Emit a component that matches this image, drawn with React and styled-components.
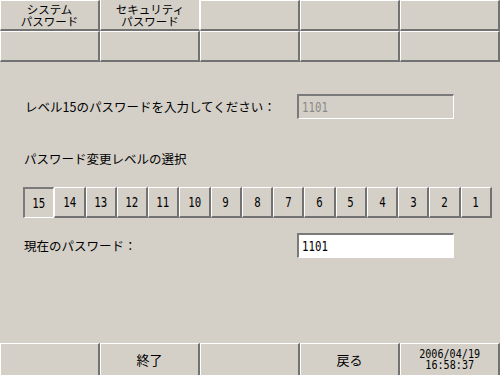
import styled, { createGlobalStyle } from "styled-components"

const GlobalStyle = createGlobalStyle`
  html, body {
    margin: 0;
    padding: 0;
    background: #d4d0c8;
  }
  body {
    font-family: "Noto Sans CJK JP", "Noto Sans", sans-serif;
    color: #000;
  }
`

const Screen = styled.div`
  width: 500px;
  height: 375px;
  background: #d4d0c8;
  display: flex;
  flex-direction: column;
  overflow: hidden;
`

const TabGrid = styled.div`
  display: grid;
  grid-template-columns: repeat(5, 100px);
  grid-template-rows: 31px 31px;
`

const PanelButton = styled.div`
  box-sizing: border-box;
  display: flex;
  flex-direction: column;
  align-items: center;
  justify-content: center;
  text-align: center;
  border-style: solid;
  border-width: 1px 2px 2px 1px;
  border-color: #ffffff #727272 #727272 #ffffff;
  font-size: 11.5px;
  line-height: 12px;
  ${p => p.$active && `
    border-color: #ffffff #ffffff #727272 #ffffff;
    border-width: 0 1px 2px 1px;
  `}
`

const Content = styled.div`
  flex: 1;
  display: flex;
  flex-direction: column;
  padding: 32px 0 0 24px;
`

const FieldRow = styled.div`
  display: grid;
  grid-template-columns: 273px 157px;
  align-items: center;
  height: 25px;
  font-size: 12.5px;
  margin-top: ${p => p.$top || 0}px;
`

const Label = styled.div`
  font-size: 12.5px;
  line-height: 14px;
  padding-left: ${p => p.$indent || 0}px;
`

const SectionLabel = styled(Label)`
  margin-top: 33px;
`

const TextBox = styled.div`
  box-sizing: border-box;
  width: 157px;
  height: 25px;
  display: flex;
  align-items: center;
  padding-left: 3px;
  border-style: solid;
  border-width: 2px 1px 1px 2px;
  border-color: #7a7a7a #ffffff #ffffff #7a7a7a;
  background: ${p => (p.$disabled ? "#d4d0c8" : "#ffffff")};
  color: ${p => (p.$disabled ? "#8c8a86" : "#000")};
`

const Digits = styled.span`
  display: inline-block;
  font-family: "DejaVu Sans Mono", "Liberation Mono", monospace;
  font-size: ${p => p.$size || 14.5}px;
  line-height: ${p => p.$size || 14.5}px;
  transform: scaleX(${p => p.$squeeze || 0.74});
  transform-origin: ${p => p.$origin || "center"};
`

const LevelRow = styled.div`
  display: grid;
  grid-template-columns: repeat(15, 1fr);
  width: 469px;
  height: 31px;
  margin: 21px 0 0 -1px;
`

const LevelButton = styled.div`
  box-sizing: border-box;
  display: flex;
  align-items: center;
  justify-content: center;
  border-style: solid;
  border-width: 1px 2px 2px 1px;
  border-color: #ffffff #727272 #727272 #ffffff;
  ${p => p.$selected && `
    border-width: 2px 1px 1px 2px;
    border-color: #7a7a7a #ffffff #ffffff #7a7a7a;
  `}
`

const BottomBar = styled.div`
  display: grid;
  grid-template-columns: repeat(5, 100px);
  height: 32px;
`

const BarButton = styled(PanelButton)`
  border-width: 1px 2px 0 1px;
  font-size: 13px;
  line-height: 14px;
`

const Clock = styled.div`
  display: flex;
  flex-direction: column;
  align-items: center;
  margin-top: 1px;
`

const levels = [15, 14, 13, 12, 11, 10, 9, 8, 7, 6, 5, 4, 3, 2, 1]

export default function App() {
  return (
    <>
      <GlobalStyle />
      <Screen>
        <TabGrid>
          <PanelButton>
            <span>システム</span>
            <span>パスワード</span>
          </PanelButton>
          <PanelButton $active>
            <span>セキュリティ</span>
            <span>パスワード</span>
          </PanelButton>
          <PanelButton />
          <PanelButton />
          <PanelButton />
          <PanelButton />
          <PanelButton />
          <PanelButton />
          <PanelButton />
          <PanelButton />
        </TabGrid>

        <Content>
          <FieldRow>
            <Label $indent={1}>レベル15のパスワードを入力してください：</Label>
            <TextBox $disabled>
              <Digits $origin="left">1101</Digits>
            </TextBox>
          </FieldRow>

          <SectionLabel>パスワード変更レベルの選択</SectionLabel>

          <LevelRow>
            {levels.map(n => (
              <LevelButton key={n} $selected={n === 15}>
                <Digits>{n}</Digits>
              </LevelButton>
            ))}
          </LevelRow>

          <FieldRow $top={15}>
            <Label>現在のパスワード：</Label>
            <TextBox>
              <Digits $origin="left">1101</Digits>
            </TextBox>
          </FieldRow>
        </Content>

        <BottomBar>
          <BarButton />
          <BarButton>終了</BarButton>
          <BarButton />
          <BarButton>戻る</BarButton>
          <BarButton>
            <Clock>
              <Digits $size={11.5} $squeeze={0.88}>2006/04/19</Digits>
              <Digits $size={11.5} $squeeze={0.88}>16:58:37</Digits>
            </Clock>
          </BarButton>
        </BottomBar>
      </Screen>
    </>
  )
}
